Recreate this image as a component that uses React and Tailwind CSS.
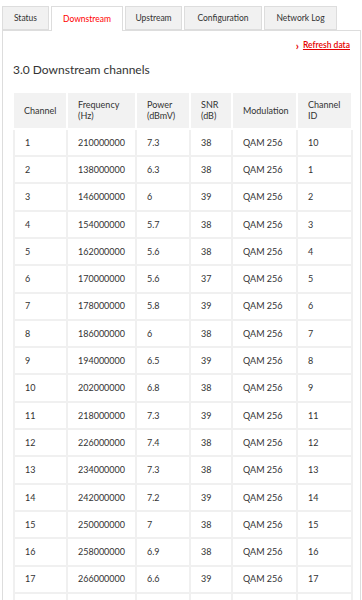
const rows = [
  ["1", "210000000", "7.3", "38", "QAM 256", "10"],
  ["2", "138000000", "6.3", "38", "QAM 256", "1"],
  ["3", "146000000", "6", "39", "QAM 256", "2"],
  ["4", "154000000", "5.7", "38", "QAM 256", "3"],
  ["5", "162000000", "5.6", "38", "QAM 256", "4"],
  ["6", "170000000", "5.6", "37", "QAM 256", "5"],
  ["7", "178000000", "5.8", "39", "QAM 256", "6"],
  ["8", "186000000", "6", "38", "QAM 256", "7"],
  ["9", "194000000", "6.5", "39", "QAM 256", "8"],
  ["10", "202000000", "6.8", "38", "QAM 256", "9"],
  ["11", "218000000", "7.3", "39", "QAM 256", "11"],
  ["12", "226000000", "7.4", "38", "QAM 256", "12"],
  ["13", "234000000", "7.3", "38", "QAM 256", "13"],
  ["14", "242000000", "7.2", "39", "QAM 256", "14"],
  ["15", "250000000", "7", "38", "QAM 256", "15"],
  ["16", "258000000", "6.9", "38", "QAM 256", "16"],
  ["17", "266000000", "6.6", "39", "QAM 256", "17"],
];

const tabs = [
  { label: "Status", w: "w-[47px]" },
  { label: "Downstream", w: "w-[72px]", active: true },
  { label: "Upstream", w: "w-[57px]" },
  { label: "Configuration", w: "w-[78px]" },
  { label: "Network Log", w: "w-[73px]" },
];

const headers = [
  ["Channel", "w-[53px]"],
  ["Frequency (Hz)", "w-[69px]"],
  ["Power (dBmV)", "w-[54px]"],
  ["SNR (dB)", "w-[42px]"],
  ["Modulation", "w-[65px]"],
  ["Channel ID", "w-[55px]"],
];

export default function App() {
  return (
    <div className="h-[600px] overflow-hidden bg-white pl-[2px] pt-[6px] text-[#333] font-['Lato','Noto_Sans',sans-serif]">
      <div className="flex gap-[2px]">
        {tabs.map((t) => (
          <div
            key={t.label}
            className={
              t.active
                ? `${t.w} h-[25px] -mb-px flex items-center justify-center border border-b-0 border-[#ddd] bg-white text-[8.5px] text-[#f00]`
                : `${t.w} h-[24px] flex items-center justify-center border border-[#ddd] bg-[#f1f1f1] text-[8.5px] text-[#333]`
            }
          >
            {t.label}
          </div>
        ))}
      </div>
      <div className="border border-[#ddd] w-[359px] min-h-[600px] px-[10px]">
        <div className="flex justify-end items-center gap-[4px] pt-[8px] text-[8.5px] font-semibold text-[#e60000]">
          <span className="text-[11px] font-bold leading-none">›</span>
          <span className="underline">Refresh data</span>
        </div>
        <h2 className="mt-[9px] text-[12px] text-[#333]">3.0 Downstream channels</h2>
        <table className="mt-[12px] border-collapse text-[9px] w-[338px] table-fixed">
          <thead>
            <tr>
              {headers.map(([h, w]) => (
                <th
                  key={h}
                  className={`${w} h-[37px] border-2 border-white bg-[#f2f2f2] px-[10px] text-left font-normal leading-[11px] first:border-l-0`}
                >
                  {h}
                </th>
              ))}
            </tr>
          </thead>
          <tbody>
            {rows.map((r) => (
              <tr key={r[0]}>
                {r.map((c, i) => (
                  <td key={i} className="h-[27.3px] border-2 border-[#f0f0f0] px-[10px]">
                    {c}
                  </td>
                ))}
              </tr>
            ))}
            <tr>
              {headers.map(([h]) => (
                <td key={h} className="h-[27.3px] border-2 border-[#f0f0f0] px-[10px]" />
              ))}
            </tr>
          </tbody>
        </table>
      </div>
    </div>
  );
}
